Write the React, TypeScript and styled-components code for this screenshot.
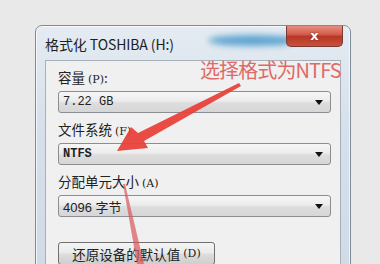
import styled, { createGlobalStyle } from "styled-components";

const GlobalStyle = createGlobalStyle`
  html, body {
    margin: 0;
    padding: 0;
    overflow: hidden;
    background: #e9e9e9;
    font-family: "Noto Sans CJK SC", "Noto Sans", sans-serif;
  }
`;

const Page = styled.div`
  position: relative;
  width: 380px;
  height: 264px;
  padding: 25px 0 0 35px;
  box-sizing: border-box;
`;

const Window = styled.div`
  width: 316px;
  height: 270px;
  box-sizing: border-box;
  display: flex;
  flex-direction: column;
  border: 1px solid #7d8a98;
  border-radius: 7px 7px 0 0;
  background: linear-gradient(180deg, #e4ebf2 0%, #d6e0ea 40%, #cfdae5 100%);
  box-shadow: inset 0 0 0 1px rgba(255, 255, 255, 0.7);
  position: relative;
  overflow: hidden;

  &::before {
    content: "";
    position: absolute;
    left: 172px;
    top: 9px;
    width: 90px;
    height: 11px;
    border-radius: 50%;
    background: #5ea4d0;
    filter: blur(3px);
  }
`;

const TitleBar = styled.div`
  height: 34px;
  display: flex;
  align-items: flex-start;
  justify-content: space-between;
  padding-left: 9px;
  position: relative;
`;

const Title = styled.div`
  font-size: 14px;
  line-height: 16px;
  padding-top: 10px;
  color: #1e1e1e;
  letter-spacing: -0.1px;
`;

const CloseButton = styled.div`
  width: 55px;
  height: 21px;
  margin-right: 7px;
  margin-top: -1px;
  border: 1px solid #7a3a32;
  border-top: none;
  border-radius: 0 0 5px 5px;
  background: linear-gradient(180deg, #e8958a 0%, #d35b4b 45%, #b73826 55%, #c8503c 100%);
  display: flex;
  align-items: center;
  justify-content: center;
  color: #fff;
  font-family: "DejaVu Sans", sans-serif;
  font-weight: bold;
  font-size: 13px;
  text-shadow: 0 0 2px #6b1a10;
`;

const Client = styled.div`
  flex: 1;
  margin: 0 9px;
  background: #f0f0f0;
  border: 1px solid #a6b0ba;
  padding: 7px 10px 0 12px;
  display: flex;
  flex-direction: column;
  gap: 7px;
`;

const Field = styled.div`
  display: flex;
  flex-direction: column;
  gap: 5px;
`;

const Label = styled.div`
  height: 18px;
  font-size: 13.5px;
  line-height: 18px;
  color: #222;
  white-space: nowrap;
  span {
    font-family: "DejaVu Serif", serif;
    font-size: 11px;
    line-height: 18px;
  }
`;

const Select = styled.div<{ $bold?: boolean }>`
  height: 22px;
  box-sizing: border-box;
  width: 273px;
  border: 1px solid #8a8d91;
  border-radius: 3px;
  background: linear-gradient(180deg, #f6f6f6 0%, #ececec 45%, #dddddd 55%, #d6d6d6 100%);
  display: flex;
  align-items: center;
  justify-content: space-between;
  padding: 0 7px 0 4px;
  font-family: "Liberation Mono", monospace;
  font-size: 12px;
  font-weight: ${(p) => (p.$bold ? "bold" : "normal")};
  color: #222;
`;

const Value = styled.span`
  font-family: "Liberation Sans", "Noto Sans CJK SC", sans-serif;
  font-size: 13px;
`;

const Caret = styled.span`
  width: 0;
  height: 0;
  border-left: 4px solid transparent;
  border-right: 4px solid transparent;
  border-top: 5px solid #111;
`;

const Button = styled.div`
  margin-top: 18px;
  width: 157px;
  height: 23px;
  box-sizing: border-box;
  border: 1px solid #707070;
  border-radius: 3px;
  background: linear-gradient(180deg, #f4f4f4 0%, #ebebeb 45%, #dcdcdc 55%, #cfcfcf 100%);
  display: flex;
  align-items: center;
  justify-content: center;
  font-size: 13.5px;
  line-height: 18px;
  color: #222;
  span {
    font-family: "DejaVu Serif", serif;
    font-size: 11px;
    margin-left: 3px;
  }
`;

const Note = styled.div`
  position: absolute;
  left: 200px;
  top: 57px;
  font-size: 20px;
  line-height: 26px;
  color: #e06a68;
  letter-spacing: -0.9px;
`;

const Overlay = styled.svg`
  position: absolute;
  left: 0;
  top: 0;
  pointer-events: none;
`;

export default function App() {
  return (
    <>
      <GlobalStyle />
      <Page>
        <Window>
          <TitleBar>
            <Title>格式化 TOSHIBA (H:)</Title>
            <CloseButton>x</CloseButton>
          </TitleBar>
          <Client>
            <Field>
              <Label>
                容量 <span>(P)</span>:
              </Label>
              <Select>
                7.22 GB
                <Caret />
              </Select>
            </Field>
            <Field>
              <Label>
                文件系统 <span>(F)</span>
              </Label>
              <Select $bold>
                NTFS
                <Caret />
              </Select>
            </Field>
            <Field>
              <Label>
                分配单元大小 <span>(A)</span>
              </Label>
              <Select>
                <Value>4096 字节</Value>
                <Caret />
              </Select>
            </Field>
            <Button>
              还原设备的默认值<span>(D)</span>
            </Button>
          </Client>
        </Window>
        <Note>选择格式为NTFS</Note>
        <Overlay width="380" height="264" viewBox="0 0 380 264">
          <polygon
            points="239,83 241,86 144,141 148,148 117,151 131,127 138,133"
            fill="#e8413b"
            opacity="0.95"
          />
          <polygon points="123,184 125,184 144,264 137,264" fill="#d9555a" opacity="0.7" />
        </Overlay>
      </Page>
    </>
  );
}
